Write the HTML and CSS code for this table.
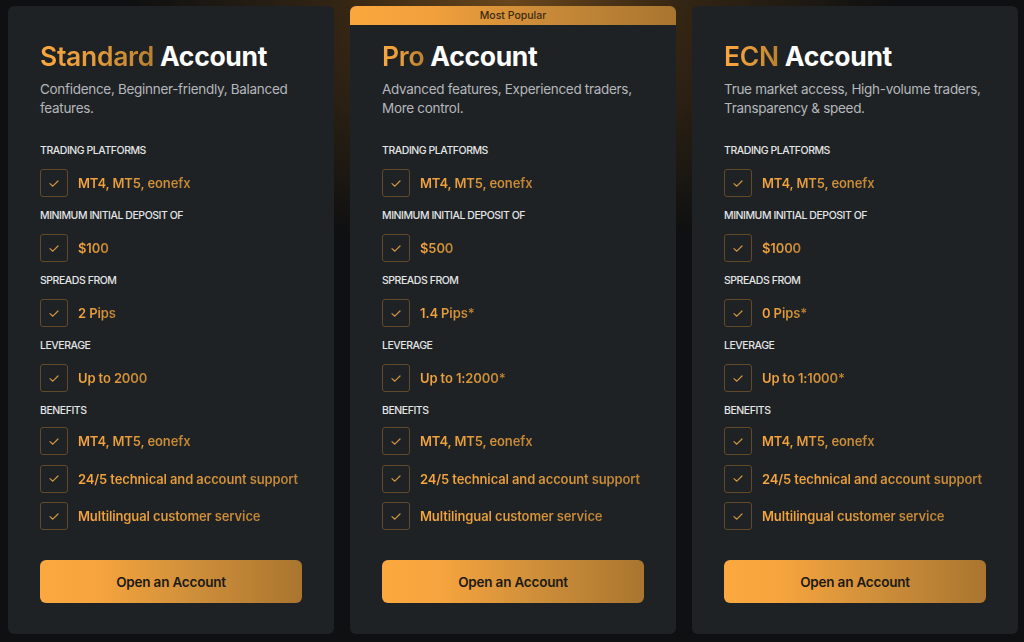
FILE: index.html
```html
<!DOCTYPE html>
<html lang="en">
<head>
<meta charset="utf-8">
<title>Account Types</title>
<link rel="stylesheet" href="styles.css">
</head>
<body>
<main class="plans">
  <section class="card">
    <h2 class="title"><span class="accent">Standard</span> Account</h2>
    <p class="desc">Confidence, Beginner-friendly, Balanced features.</p>
    <div class="features">
      <div class="group">
        <div class="label">Trading Platforms</div>
        <ul class="list"><li class="item"><span class="box"><svg viewBox="0 0 10 7" width="10" height="7"><path d="M1 3.6 L3.8 6.2 L9 1"/></svg></span><span class="val">MT4, MT5, eonefx</span></li></ul>
      </div>
      <div class="group">
        <div class="label">Minimum Initial Deposit Of</div>
        <ul class="list"><li class="item"><span class="box"><svg viewBox="0 0 10 7" width="10" height="7"><path d="M1 3.6 L3.8 6.2 L9 1"/></svg></span><span class="val">$100</span></li></ul>
      </div>
      <div class="group">
        <div class="label">Spreads From</div>
        <ul class="list"><li class="item"><span class="box"><svg viewBox="0 0 10 7" width="10" height="7"><path d="M1 3.6 L3.8 6.2 L9 1"/></svg></span><span class="val">2 Pips</span></li></ul>
      </div>
      <div class="group">
        <div class="label">Leverage</div>
        <ul class="list"><li class="item"><span class="box"><svg viewBox="0 0 10 7" width="10" height="7"><path d="M1 3.6 L3.8 6.2 L9 1"/></svg></span><span class="val">Up to 2000</span></li></ul>
      </div>
      <div class="group">
        <div class="label">Benefits</div>
        <ul class="list list-benefits">
          <li class="item"><span class="box"><svg viewBox="0 0 10 7" width="10" height="7"><path d="M1 3.6 L3.8 6.2 L9 1"/></svg></span><span class="val">MT4, MT5, eonefx</span></li>
          <li class="item"><span class="box"><svg viewBox="0 0 10 7" width="10" height="7"><path d="M1 3.6 L3.8 6.2 L9 1"/></svg></span><span class="val">24/5 technical and account support</span></li>
          <li class="item"><span class="box"><svg viewBox="0 0 10 7" width="10" height="7"><path d="M1 3.6 L3.8 6.2 L9 1"/></svg></span><span class="val">Multilingual customer service</span></li>
        </ul>
      </div>
    </div>
    <a class="btn" href="#">Open an Account</a>
  </section>

  <section class="card card-popular">
    <div class="badge">Most Popular</div>
    <h2 class="title"><span class="accent">Pro</span> Account</h2>
    <p class="desc">Advanced features, Experienced traders, More control.</p>
    <div class="features">
      <div class="group">
        <div class="label">Trading Platforms</div>
        <ul class="list"><li class="item"><span class="box"><svg viewBox="0 0 10 7" width="10" height="7"><path d="M1 3.6 L3.8 6.2 L9 1"/></svg></span><span class="val">MT4, MT5, eonefx</span></li></ul>
      </div>
      <div class="group">
        <div class="label">Minimum Initial Deposit Of</div>
        <ul class="list"><li class="item"><span class="box"><svg viewBox="0 0 10 7" width="10" height="7"><path d="M1 3.6 L3.8 6.2 L9 1"/></svg></span><span class="val">$500</span></li></ul>
      </div>
      <div class="group">
        <div class="label">Spreads From</div>
        <ul class="list"><li class="item"><span class="box"><svg viewBox="0 0 10 7" width="10" height="7"><path d="M1 3.6 L3.8 6.2 L9 1"/></svg></span><span class="val">1.4 Pips*</span></li></ul>
      </div>
      <div class="group">
        <div class="label">Leverage</div>
        <ul class="list"><li class="item"><span class="box"><svg viewBox="0 0 10 7" width="10" height="7"><path d="M1 3.6 L3.8 6.2 L9 1"/></svg></span><span class="val">Up to 1:2000*</span></li></ul>
      </div>
      <div class="group">
        <div class="label">Benefits</div>
        <ul class="list list-benefits">
          <li class="item"><span class="box"><svg viewBox="0 0 10 7" width="10" height="7"><path d="M1 3.6 L3.8 6.2 L9 1"/></svg></span><span class="val">MT4, MT5, eonefx</span></li>
          <li class="item"><span class="box"><svg viewBox="0 0 10 7" width="10" height="7"><path d="M1 3.6 L3.8 6.2 L9 1"/></svg></span><span class="val">24/5 technical and account support</span></li>
          <li class="item"><span class="box"><svg viewBox="0 0 10 7" width="10" height="7"><path d="M1 3.6 L3.8 6.2 L9 1"/></svg></span><span class="val">Multilingual customer service</span></li>
        </ul>
      </div>
    </div>
    <a class="btn" href="#">Open an Account</a>
  </section>

  <section class="card">
    <h2 class="title"><span class="accent">ECN</span> Account</h2>
    <p class="desc">True market access, High-volume traders, Transparency &amp; speed.</p>
    <div class="features">
      <div class="group">
        <div class="label">Trading Platforms</div>
        <ul class="list"><li class="item"><span class="box"><svg viewBox="0 0 10 7" width="10" height="7"><path d="M1 3.6 L3.8 6.2 L9 1"/></svg></span><span class="val">MT4, MT5, eonefx</span></li></ul>
      </div>
      <div class="group">
        <div class="label">Minimum Initial Deposit Of</div>
        <ul class="list"><li class="item"><span class="box"><svg viewBox="0 0 10 7" width="10" height="7"><path d="M1 3.6 L3.8 6.2 L9 1"/></svg></span><span class="val">$1000</span></li></ul>
      </div>
      <div class="group">
        <div class="label">Spreads From</div>
        <ul class="list"><li class="item"><span class="box"><svg viewBox="0 0 10 7" width="10" height="7"><path d="M1 3.6 L3.8 6.2 L9 1"/></svg></span><span class="val">0 Pips*</span></li></ul>
      </div>
      <div class="group">
        <div class="label">Leverage</div>
        <ul class="list"><li class="item"><span class="box"><svg viewBox="0 0 10 7" width="10" height="7"><path d="M1 3.6 L3.8 6.2 L9 1"/></svg></span><span class="val">Up to 1:1000*</span></li></ul>
      </div>
      <div class="group">
        <div class="label">Benefits</div>
        <ul class="list list-benefits">
          <li class="item"><span class="box"><svg viewBox="0 0 10 7" width="10" height="7"><path d="M1 3.6 L3.8 6.2 L9 1"/></svg></span><span class="val">MT4, MT5, eonefx</span></li>
          <li class="item"><span class="box"><svg viewBox="0 0 10 7" width="10" height="7"><path d="M1 3.6 L3.8 6.2 L9 1"/></svg></span><span class="val">24/5 technical and account support</span></li>
          <li class="item"><span class="box"><svg viewBox="0 0 10 7" width="10" height="7"><path d="M1 3.6 L3.8 6.2 L9 1"/></svg></span><span class="val">Multilingual customer service</span></li>
        </ul>
      </div>
    </div>
    <a class="btn" href="#">Open an Account</a>
  </section>
</main>
</body>
</html>
```

FILE: styles.css
```css
* { box-sizing: border-box; }

html, body {
  margin: 0;
  padding: 0;
}

body {
  width: 1024px;
  height: 642px;
  overflow: hidden;
  font-family: Inter, "Noto Sans", "Liberation Sans", sans-serif;
  background-color: #0f1011;
  background-image: radial-gradient(ellipse 380px 260px at 512px 0px, rgba(128, 84, 30, 0.8) 0%, rgba(88, 58, 22, 0.5) 45%, rgba(15, 16, 17, 0) 100%);
  color: #fff;
}

.plans {
  display: flex;
  gap: 16px;
  padding: 6px 6px 0 8px;
}

.card {
  width: 326px;
  height: 628px;
  background: #1f2225;
  border-radius: 6px;
  padding: 34px 32px 31px;
  display: flex;
  flex-direction: column;
}

.card-popular {
  padding-top: 0;
}

.badge {
  margin: 0 -32px 15px;
  height: 19px;
  line-height: 19px;
  text-align: center;
  font-size: 10.5px;
  font-weight: 500;
  color: #3b2a14;
  border-radius: 6px 6px 0 0;
  background: linear-gradient(90deg, #fba73e 0%, #f1a03c 25%, #c98a39 60%, #a8752f 100%);
}

.title {
  margin: 0;
  font-size: 26.5px;
  line-height: 32px;
  font-weight: 700;
  letter-spacing: -0.3px;
  color: #ffffff;
}

.accent {
  font-weight: 600;
  background: linear-gradient(90deg, #fba73e 0%, #e39a3b 50%, #b7802f 100%);
  -webkit-background-clip: text;
  background-clip: text;
  color: transparent;
}

.desc {
  margin: 8px 0 0;
  font-size: 13.5px;
  line-height: 19px;
  color: #b4b7bb;
  letter-spacing: -0.3px;
}

.features {
  margin-top: 26px;
  display: flex;
  flex-direction: column;
  gap: 12px;
}

.label {
  font-size: 10.5px;
  line-height: 14px;
  font-weight: 500;
  text-transform: uppercase;
  letter-spacing: -0.45px;
  color: #e4e5e6;
}

.list {
  list-style: none;
  margin: 11px 0 0;
  padding: 0;
  display: flex;
  flex-direction: column;
  gap: 9.5px;
}

.list-benefits {
  margin-top: 9px;
}

.item {
  display: flex;
  align-items: center;
  gap: 10px;
  height: 28px;
}

.box {
  width: 28px;
  height: 28px;
  flex: none;
  border: 1px solid #624929;
  border-radius: 3px;
  display: flex;
  align-items: center;
  justify-content: center;
}

.box svg path {
  fill: none;
  stroke: #d3953f;
  stroke-width: 1.2;
  stroke-linecap: round;
  stroke-linejoin: round;
}

.val {
  display: inline-block;
  white-space: nowrap;
  font-size: 13px;
  font-weight: 600;
  letter-spacing: -0.12px;
  background: linear-gradient(90deg, #f8a63e 0%, #e69d3c 40%, #bd8435 100%);
  -webkit-background-clip: text;
  background-clip: text;
  color: transparent;
}

.btn {
  margin-top: auto;
  height: 43px;
  border-radius: 6px;
  display: flex;
  align-items: center;
  justify-content: center;
  text-decoration: none;
  font-size: 13.5px;
  font-weight: 600;
  letter-spacing: -0.2px;
  color: #1c1a17;
  background: linear-gradient(90deg, #fca83f 0%, #f6a43e 22%, #d2913b 55%, #a9752f 100%);
}
```
